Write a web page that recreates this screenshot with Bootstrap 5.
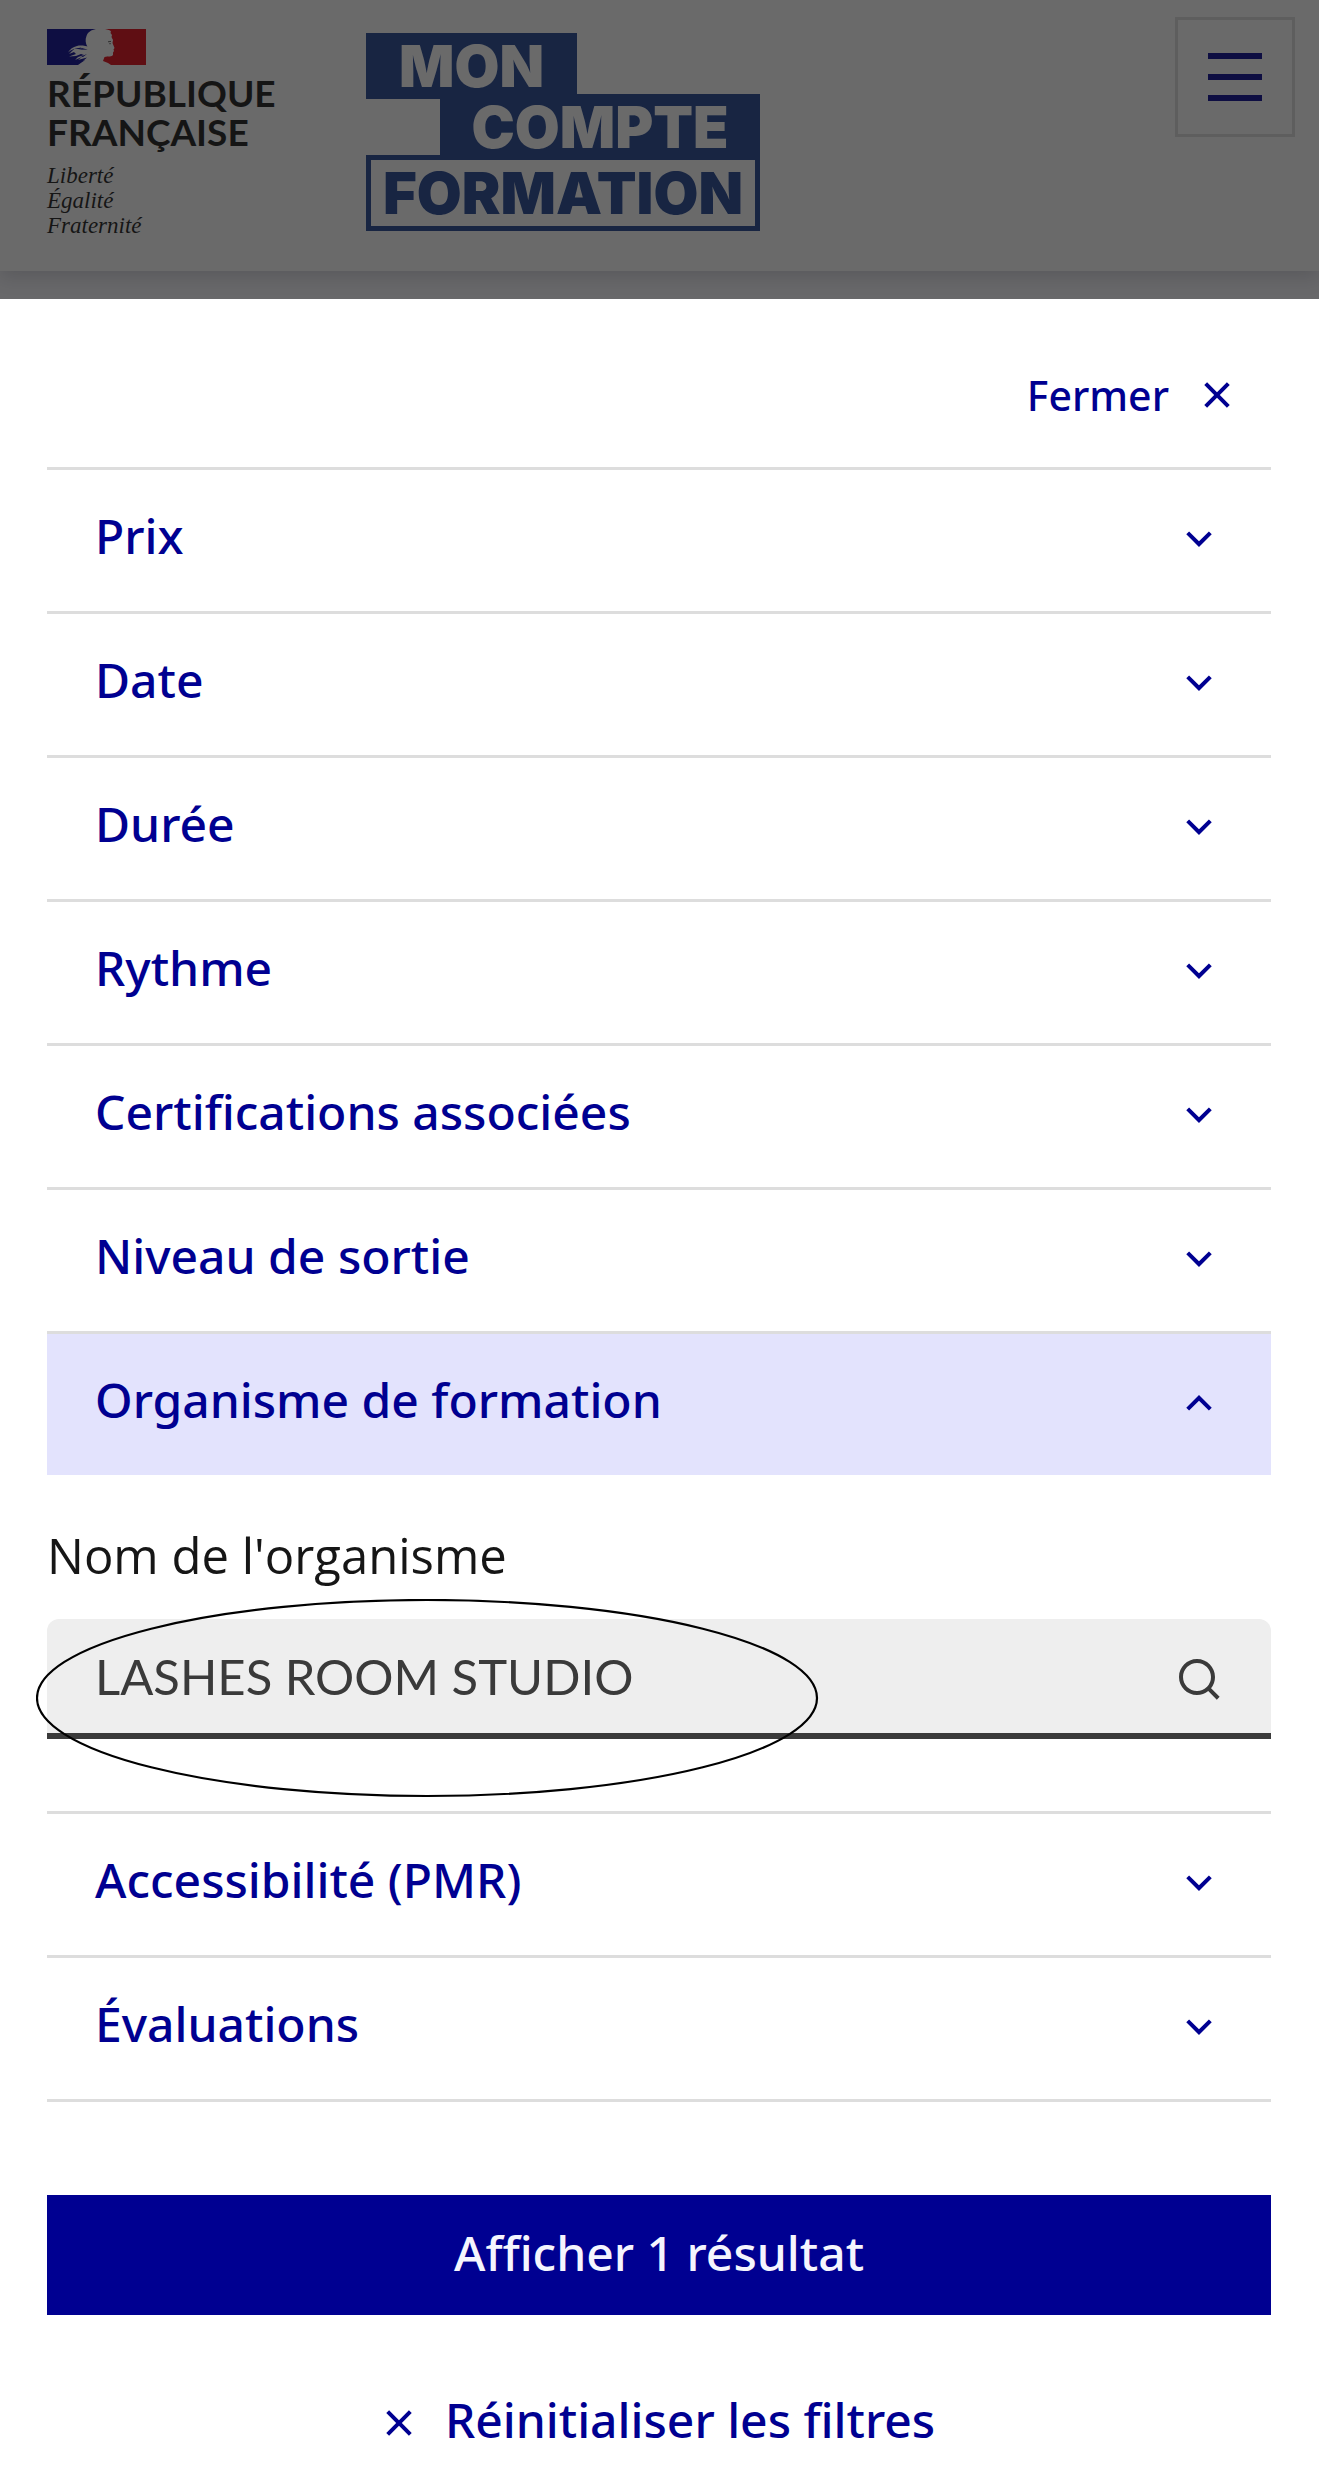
<!DOCTYPE html>
<html lang="fr">
<head>
<meta charset="utf-8">
<meta name="viewport" content="width=device-width, initial-scale=1">
<title>Mon Compte Formation – Filtres</title>
<link rel="stylesheet" href="https://cdn.jsdelivr.net/npm/bootstrap@5.3.0/dist/css/bootstrap.min.css">
<style>
  :root { --blue-france: #000091; --grey-line: #ddd; --grey-dark: #3a3a3a; }
  body { font-family: "Open Sans", "Noto Sans", sans-serif; font-size: 49px; line-height: 72px; color: #161616; background: #f8f8fe; }
  .site-header { background: #fff; padding: 29px 24px 33px 47px; box-shadow: 0 6px 18px rgba(0, 0, 18, .16); margin-bottom: 28px; }
  .brand-block { width: 232px; }
  .state-flag { width: 99px; height: 36px; margin-bottom: 8px; }
  .state-name { font: 700 37px/39px Lato, sans-serif; margin-bottom: 12px; }
  .state-motto { font: italic 400 23px/25px "Liberation Serif", serif; }
  .mcf-logo { width: 394px; margin: 4px 0 0 87px; font: 900 58px/66px Inter, sans-serif; color: #1c4091; }
  .mcf-logo span { text-align: center; }
  .mcf-solid { background: #1c4091; color: #fff; }
  .mcf-one { width: 211px; }
  .mcf-two { width: 320px; margin-top: -5px; }
  .mcf-three { border: 5px solid #1c4091; margin-top: -5px; }
  .menu-toggle { width: 120px; height: 120px; margin-top: -12px; border: 3px solid var(--grey-line); background: transparent; }
  .menu-toggle svg { width: 54px; height: 48px; }
  .page-shade { position: fixed; inset: 0; background: rgba(22, 22, 22, .64); z-index: 10; }
  .filter-panel { z-index: 20; background: #fff; padding: 60px 48px 21px 47px; }
  .plain-btn { border: 0; background: transparent; color: var(--blue-france); font-family: "Noto Sans", sans-serif; font-weight: 500; font-size: 48px; padding: 0; }
  .glyph { width: 48px; height: 48px; flex: none; fill: currentColor; }
  .close-btn { font-size: 41px; gap: 24px; margin: 0 30px 36px 0; }
  .filter-list { border-bottom: 3px solid var(--grey-line); }
  .filter-toggle { border-top: 3px solid var(--grey-line); padding: 33px 48px 36px; }
  .filter-toggle[aria-expanded="true"] { background: #e3e3fd; }
  .filter-toggle[aria-expanded="true"] .glyph { transform: rotate(180deg); }
  .btn-text { line-height: 66px; padding-bottom: 6px; }
  .filter-body { padding: 44px 0 72px; }
  .filter-body label { margin-bottom: 28px; }
  .search-box { background: #eee; border-bottom: 6px solid var(--grey-dark); border-radius: 12px 12px 0 0; padding: 0 48px; color: var(--grey-dark); }
  .search-box input { height: 114px; border: 0; background: transparent; color: inherit; font-family: Lato, sans-serif; padding: 0; min-width: 0; outline-offset: -4px; }
  .search-box button { color: inherit; padding-top: 6px; }
  .circle-mark { left: -11px; top: 124px; width: 783px; height: 200px; pointer-events: none; }
  .show-btn { border: 0; background: var(--blue-france); color: #f5f5fe; font-family: "Noto Sans", sans-serif; font-weight: 500; font-size: 48px; padding: 22px 24px 26px; margin: 93px 0 72px; }
  .reset-btn { gap: 22px; padding-right: 8px; }
</style>
<script src="https://cdn.jsdelivr.net/npm/bootstrap@5.3.0/dist/js/bootstrap.bundle.min.js" defer></script>
</head>
<body>
<svg class="d-none" xmlns="http://www.w3.org/2000/svg">
  <symbol id="chevron" viewBox="0 0 24 24"><path d="M12 13.172l4.95-4.95 1.414 1.414L12 16 5.636 9.636 7.05 8.222z"/></symbol>
  <symbol id="cross" viewBox="0 0 24 24"><path d="M12 10.586l4.95-4.95 1.414 1.414-4.95 4.95 4.95 4.95-1.414 1.414-4.95-4.95-4.95 4.95-1.414-1.414 4.95-4.95-4.95-4.95L7.05 5.636z"/></symbol>
  <symbol id="lens" viewBox="0 0 24 24"><path d="M18.031 16.617l4.283 4.282-1.415 1.415-4.282-4.283A8.96 8.96 0 0 1 11 20c-4.968 0-9-4.032-9-9s4.032-9 9-9 9 4.032 9 9a8.96 8.96 0 0 1-1.969 5.617zm-2.006-.742A6.977 6.977 0 0 0 18 11c0-3.868-3.133-7-7-7-3.868 0-7 3.132-7 7 0 3.867 3.132 7 7 7a6.977 6.977 0 0 0 4.875-1.975l.15-.15z"/></symbol>
</svg>

<header class="site-header d-flex align-items-start">
  <div class="brand-block">
    <svg class="state-flag d-block" viewBox="0 0 99 36" aria-hidden="true">
      <path fill="#fff" d="M28 0h44v36H28z"/>
      <path fill="#000091" d="M0 0H49C44 1 41 3 39.500 7C38 11 38.500 14 40.500 18L43 22L44 27C40 30 35 33 31 36H0z"/>
      <path fill="#e1000f" d="M99 0H58C61 .5 63 1 64 2.500L63.500 4L65 6L64.500 8L66 11L65.500 14L67.500 19L66.500 20.500L67 22L66 23.500L66 26C65 28 61 27 57.500 28L56 32L61 34L64 36H99z"/>
      <path fill="#fff" d="M44 18C38 17 34 16 30 17C26 18 23 20 21 23.500C25 20 29 18.500 33 19L37 21L28 19.500L25 22L22 25L27 23L29 25L22 27.500L29 27L34 25L37 26L31 28L28 31L35 28L31 31L40 28.500L36 32L45 29z"/>
      <path fill="#000091" d="M32 18.200l9 2.500-5-.3zM34 27.500l6-2.500-4 3z"/>
      <path fill="none" stroke="#444" stroke-width=".9" d="M61 12.800l3-.4M62.300 14.700h1.500"/>
    </svg>
    <div class="state-name">RÉPUBLIQUE<br>FRANÇAISE</div>
    <div class="state-motto">Liberté<br>Égalité<br>Fraternité</div>
  </div>
  <div class="mcf-logo d-flex flex-column">
    <span class="mcf-solid mcf-one">MON</span>
    <span class="mcf-solid mcf-two align-self-end">COMPTE</span>
    <span class="mcf-three">FORMATION</span>
  </div>
  <button type="button" class="menu-toggle ms-auto d-flex align-items-center justify-content-center" aria-label="Menu">
    <svg viewBox="0 0 54 48" fill="#000091" aria-hidden="true"><path d="M0 0h54v6H0zM0 21h54v6H0zM0 42h54v6H0z"/></svg>
  </button>
</header>
<div class="page-shade"></div>

<main class="filter-panel position-relative">
  <div class="d-flex justify-content-end">
    <button type="button" class="plain-btn close-btn d-flex align-items-center">Fermer<svg class="glyph" aria-hidden="true"><use href="#cross"/></svg></button>
  </div>

  <div class="filter-list">
    <button type="button" class="plain-btn filter-toggle w-100 d-flex align-items-center justify-content-between text-start" aria-expanded="false"><span class="btn-text">Prix</span><svg class="glyph" aria-hidden="true"><use href="#chevron"/></svg></button>
    <button type="button" class="plain-btn filter-toggle w-100 d-flex align-items-center justify-content-between text-start" aria-expanded="false"><span class="btn-text">Date</span><svg class="glyph" aria-hidden="true"><use href="#chevron"/></svg></button>
    <button type="button" class="plain-btn filter-toggle w-100 d-flex align-items-center justify-content-between text-start" aria-expanded="false"><span class="btn-text">Durée</span><svg class="glyph" aria-hidden="true"><use href="#chevron"/></svg></button>
    <button type="button" class="plain-btn filter-toggle w-100 d-flex align-items-center justify-content-between text-start" aria-expanded="false"><span class="btn-text">Rythme</span><svg class="glyph" aria-hidden="true"><use href="#chevron"/></svg></button>
    <button type="button" class="plain-btn filter-toggle w-100 d-flex align-items-center justify-content-between text-start" aria-expanded="false"><span class="btn-text">Certifications associées</span><svg class="glyph" aria-hidden="true"><use href="#chevron"/></svg></button>
    <button type="button" class="plain-btn filter-toggle w-100 d-flex align-items-center justify-content-between text-start" aria-expanded="false"><span class="btn-text">Niveau de sortie</span><svg class="glyph" aria-hidden="true"><use href="#chevron"/></svg></button>
    <button type="button" class="plain-btn filter-toggle w-100 d-flex align-items-center justify-content-between text-start" data-bs-toggle="collapse" data-bs-target="#organisme" aria-controls="organisme" aria-expanded="true"><span class="btn-text">Organisme de formation</span><svg class="glyph" aria-hidden="true"><use href="#chevron"/></svg></button>
    <div class="collapse show position-relative" id="organisme">
      <div class="filter-body">
        <label class="d-block" for="nom-organisme">Nom de l'organisme</label>
        <div class="search-box d-flex">
          <input type="text" class="flex-grow-1" id="nom-organisme" value="LASHES ROOM STUDIO">
          <button type="button" class="plain-btn d-flex align-items-center" aria-label="Rechercher"><svg class="glyph" aria-hidden="true"><use href="#lens"/></svg></button>
        </div>
      </div>
      <svg class="circle-mark position-absolute" viewBox="0 0 783 200" aria-hidden="true"><ellipse cx="391" cy="99" rx="390" ry="98" fill="none" stroke="#000" stroke-width="2.200"/></svg>
    </div>
    <button type="button" class="plain-btn filter-toggle w-100 d-flex align-items-center justify-content-between text-start" aria-expanded="false"><span class="btn-text">Accessibilité (PMR)</span><svg class="glyph" aria-hidden="true"><use href="#chevron"/></svg></button>
    <button type="button" class="plain-btn filter-toggle w-100 d-flex align-items-center justify-content-between text-start" aria-expanded="false"><span class="btn-text">Évaluations</span><svg class="glyph" aria-hidden="true"><use href="#chevron"/></svg></button>
  </div>

  <button type="submit" class="show-btn w-100 d-block">Afficher 1 résultat</button>
  <button type="reset" class="plain-btn reset-btn d-flex align-items-center mx-auto"><svg class="glyph" aria-hidden="true"><use href="#cross"/></svg><span class="btn-text">Réinitialiser les filtres</span></button>
</main>
</body>
</html>
